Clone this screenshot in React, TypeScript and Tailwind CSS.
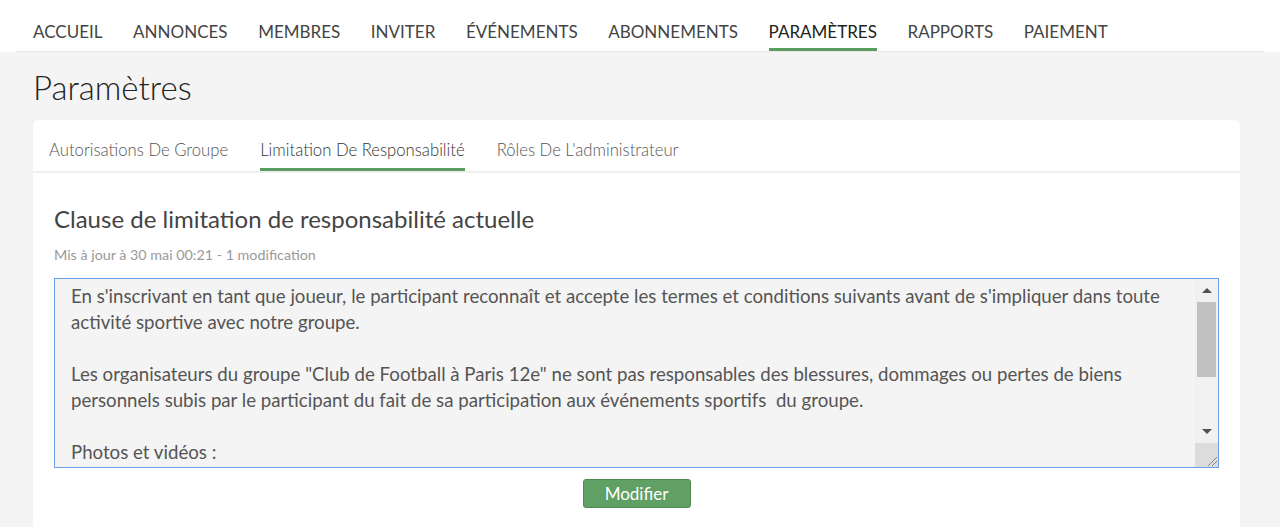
import React from "react";

const navItems = [
  "ACCUEIL",
  "ANNONCES",
  "MEMBRES",
  "INVITER",
  "ÉVÉNEMENTS",
  "ABONNEMENTS",
  "PARAMÈTRES",
  "RAPPORTS",
  "PAIEMENT",
];

const tabs = [
  "Autorisations De Groupe",
  "Limitation De Responsabilité",
  "Rôles De L'administrateur",
];

function FakeScrollbar() {
  return (
    <div className="flex w-[23px] flex-col bg-[#f1f1f1]">
      <div className="flex h-[23px] items-center justify-center">
        <div className="h-0 w-0 border-x-[5px] border-b-[5px] border-x-transparent border-b-[#505050]" />
      </div>
      <div className="mx-[2px] h-[75px] bg-[#c1c1c1]" />
      <div className="flex-1" />
      <div className="flex h-[23px] items-center justify-center">
        <div className="h-0 w-0 border-x-[5px] border-t-[5px] border-x-transparent border-t-[#505050]" />
      </div>
      <div className="relative h-[24px] bg-[#dcdcdc]">
        <svg className="absolute bottom-0 right-0" width="12" height="12" viewBox="0 0 12 12">
          <line x1="2" y1="11" x2="11" y2="2" stroke="#888" strokeWidth="1" />
          <line x1="6" y1="11" x2="11" y2="6" stroke="#888" strokeWidth="1" />
        </svg>
      </div>
    </div>
  );
}

export default function App() {
  return (
    <div className="min-h-[527px] bg-[#f4f4f4] font-['Lato','Liberation_Sans',sans-serif]">
      <div className="bg-white">
        <nav className="mx-4 flex h-[52px] items-stretch gap-[30.6px] border-b border-[#e8e8e8] pl-[17px]">
          {navItems.map((item) => (
            <div
              key={item}
              className={`flex items-end border-b-[3px] pb-[4px] text-[17px] ${
                item === "PARAMÈTRES"
                  ? "border-[#5a9e5f] text-[#222]"
                  : "border-transparent text-[#444]"
              }`}
            >
              {item}
            </div>
          ))}
        </nav>
      </div>

      <div className="px-[33px] pr-[40px]">
        <h1 className="pt-[17px] pb-[15px] text-[33px] font-light leading-[36px] text-[#222]">
          Paramètres
        </h1>

        <div className="rounded-t-md bg-white">
          <div className="flex h-[53px] items-stretch gap-8 border-b-2 border-[#f0f0f0] px-4">
            {tabs.map((tab, i) => (
              <div
                key={tab}
                className={`flex items-end border-b-[3px] pb-[5px] text-[16.7px] font-light ${
                  i === 1
                    ? "border-[#5a9e5f] text-[#333]"
                    : "border-transparent text-[#555]"
                }`}
              >
                {tab}
              </div>
            ))}
          </div>

          <div className="px-[21px] pt-[31px] pb-[20px]">
            <h2 className="text-[24px] leading-[30px] text-[#444]">
              Clause de limitation de responsabilité actuelle
            </h2>
            <p className="mt-[12px] text-[14.3px] leading-[18px] text-[#999]">
              Mis à jour à 30 mai 00:21 - 1 modification
            </p>

            <div className="mt-[14px] flex h-[190px] w-[1165px] border border-[#6d9eeb] bg-[#f4f4f4]">
              <div className="flex-1 overflow-hidden pl-[16px] pt-[4px] text-[18.67px] leading-[26px] text-[#555]">
                <p className="whitespace-nowrap">
                  En s'inscrivant en tant que joueur, le participant reconnaît et accepte les termes et conditions suivants avant de s'impliquer dans toute
                  <br />
                  activité sportive avec notre groupe.
                </p>
                <p className="mt-[26px] whitespace-nowrap">
                  Les organisateurs du groupe "Club de Football à Paris 12e" ne sont pas responsables des blessures, dommages ou pertes de biens
                  <br />
                  personnels subis par le participant du fait de sa participation aux événements sportifs&nbsp; du groupe.
                </p>
                <p className="mt-[26px]">Photos et vidéos :</p>
              </div>
              <FakeScrollbar />
            </div>

            <div className="mt-[11px] flex justify-center">
              <button className="h-[29px] w-[108px] rounded-[3px] border border-[#4f8a53] bg-[#60a064] text-[17px] text-white">
                Modifier
              </button>
            </div>
          </div>
        </div>
      </div>
    </div>
  );
}
